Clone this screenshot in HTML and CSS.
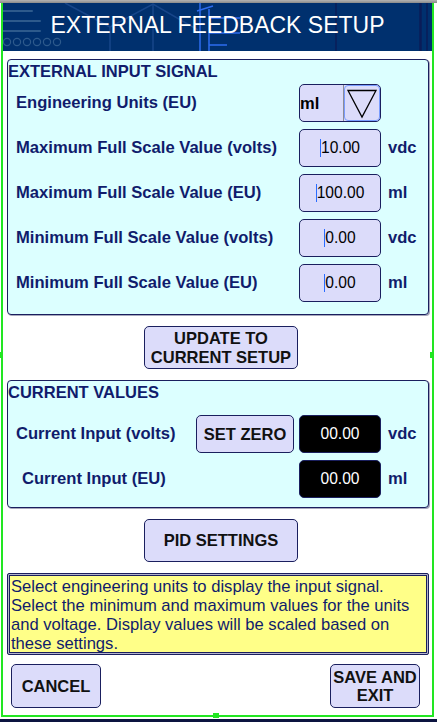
FILE: index.html
```html
<!DOCTYPE html>
<html>
<head>
<meta charset="utf-8">
<title>External Feedback Setup</title>
<link rel="stylesheet" href="styles.css">
</head>
<body>
<div class="topbar"></div>
<div class="frame">
  <header class="hdr">
    <svg class="deco" width="429" height="48" viewBox="0 0 429 48">
      <g stroke="#2d5a8c" stroke-width="2" fill="none" stroke-linecap="round">
        <line x1="0" y1="8" x2="29" y2="8"/>
        <line x1="0" y1="18" x2="37" y2="18"/>
        <line x1="0" y1="28" x2="37" y2="28"/>
      </g>
      <g stroke="#2d5a8c" stroke-width="1.2" fill="none">
        <circle cx="4" cy="39" r="3.6"/>
        <circle cx="14" cy="39" r="3.6"/>
        <circle cx="24" cy="39" r="3.6"/>
        <circle cx="34" cy="39" r="3.6"/>
        <circle cx="44" cy="39" r="3.6"/>
        <circle cx="54" cy="39" r="3.6"/>
      </g>
      <g stroke="#17468a" stroke-width="1.5" fill="none">
        <line x1="62" y1="0" x2="107" y2="24"/>
        <polyline points="107,24 150,1 195,27"/>
        <line x1="107" y1="24" x2="107" y2="48"/>
        <line x1="150" y1="1" x2="150" y2="48"/>
      </g>
      <g stroke="#2d6cf0" stroke-width="1.5" fill="none">
        <line x1="197" y1="0" x2="197" y2="48"/>
        <line x1="206" y1="6" x2="206" y2="48"/>
        <line x1="206" y1="15" x2="237" y2="15"/>
        <line x1="206" y1="30" x2="237" y2="30"/>
        <line x1="206" y1="42" x2="224" y2="42"/>
        <line x1="194" y1="8" x2="210" y2="3"/>
      </g>
      <g stroke="#0a1c58" fill="none">
        <line x1="333" y1="0" x2="333" y2="48" stroke-width="1.5"/>
        <line x1="417.5" y1="0" x2="417.5" y2="48" stroke-width="2.5"/>
        <line x1="424" y1="0" x2="424" y2="48" stroke-width="1.5"/>
      </g>
    </svg>
    <h1>EXTERNAL FEEDBACK SETUP</h1>
  </header>

  <main class="content">
    <section class="panel p1">
      <h2>EXTERNAL INPUT SIGNAL</h2>
      <div class="grid">
        <div class="lbl">Engineering Units (EU)</div>
        <div class="dropdown">
          <span class="dd-val">ml</span>
          <span class="dd-btn">
            <svg width="33" height="33" viewBox="0 0 33 33"><polygon points="2,3.5 30,3.5 16,30" fill="none" stroke="#000" stroke-width="1.3"/></svg>
          </span>
        </div>
        <div></div>

        <div class="lbl">Maximum Full Scale Value (volts)</div>
        <div class="field"><span class="caret"></span><span>10.00</span></div>
        <div class="unit">vdc</div>

        <div class="lbl">Maximum Full Scale Value (EU)</div>
        <div class="field"><span class="caret"></span><span>100.00</span></div>
        <div class="unit">ml</div>

        <div class="lbl">Minimum Full Scale Value (volts)</div>
        <div class="field"><span class="caret"></span><span>0.00</span></div>
        <div class="unit">vdc</div>

        <div class="lbl">Minimum Full Scale Value (EU)</div>
        <div class="field"><span class="caret"></span><span>0.00</span></div>
        <div class="unit">ml</div>
      </div>
    </section>

    <button class="btn btn-wide">UPDATE TO<br>CURRENT SETUP</button>

    <section class="panel p2">
      <h2>CURRENT VALUES</h2>
      <div class="grid">
        <div class="lbl">Current Input (volts)</div>
        <button class="btn setzero">SET ZERO</button>
        <div class="field display">00.00</div>
        <div class="unit">vdc</div>

        <div class="lbl lbl-indent">Current Input (EU)</div>
        <div></div>
        <div class="field display">00.00</div>
        <div class="unit">ml</div>
      </div>
    </section>

    <button class="btn btn-wide">PID SETTINGS</button>

    <div class="info">Select engineering units to display the input signal.<br>Select the minimum and maximum values for the units<br>and voltage. Display values will be scaled based on<br>these settings.</div>

    <div class="footer">
      <button class="btn btn-sm">CANCEL</button>
      <button class="btn btn-sm">SAVE AND<br>EXIT</button>
    </div>
  </main>

  <span class="handle h-left"></span>
  <span class="handle h-right"></span>
  <span class="handle h-bottom"></span>
</div>
<div class="bottombar"></div>
</body>
</html>
```

FILE: styles.css
```css
html, body {
  margin: 0;
  padding: 0;
}

body {
  width: 437px;
  height: 722px;
  overflow: hidden;
  background: #ffffff;
  font-family: "Liberation Sans", Arial, sans-serif;
}

.topbar {
  height: 3px;
  background: linear-gradient(#b4b4b4, #8a8a8a);
}

.frame {
  position: relative;
  margin-left: 1px;
  width: 429px;
  height: 712px;
  border: 2px solid #22e622;
  border-top: 0;
}

.hdr {
  position: relative;
  height: 48px;
  background: #00306e;
  overflow: hidden;
}

.deco {
  position: absolute;
  left: 0;
  top: 0;
}

.hdr h1 {
  position: relative;
  margin: 0;
  font-size: 23px;
  font-weight: normal;
  line-height: 45px;
  color: #ffffff;
  text-align: center;
}

.content {
  display: flex;
  flex-direction: column;
  height: 664px;
  box-sizing: border-box;
  padding: 8px 3px 0 4px;
}

.panel {
  background: #dcffff;
  border: 1px solid #1a1f5e;
  border-radius: 4px;
  box-shadow: 1px 1px 0 #a8a8bc;
  padding-top: 2px;
}

.panel h2 {
  margin: 0;
  font-size: 16.5px;
  line-height: 18px;
  font-weight: bold;
  color: #101c6c;
}

.grid {
  display: grid;
  grid-auto-rows: 38px;
  row-gap: 7px;
  align-items: center;
  padding-left: 8px;
}

.p1 .grid {
  grid-template-columns: 1fr 82px 47px;
  margin-top: 4px;
  padding-bottom: 12px;
}

.p2 {
  margin-top: 11px;
}

.p2 .grid {
  grid-template-columns: 1fr 103px 82px 47px;
  margin-top: 14px;
  padding-bottom: 9px;
}

.lbl {
  font-size: 16.6px;
  font-weight: bold;
  color: #101c6c;
  white-space: nowrap;
}

.lbl-indent {
  padding-left: 6px;
}

.unit {
  padding-left: 7px;
  font-size: 16.6px;
  font-weight: bold;
  color: #101c6c;
}

.field {
  height: 38px;
  box-sizing: border-box;
  border: 1.5px solid #1a1f5e;
  border-radius: 5px;
  background: #dcdcfa;
  display: flex;
  align-items: center;
  justify-content: center;
  font-size: 15.6px;
  color: #000000;
}

.caret {
  width: 1px;
  height: 18px;
  background: #2a6cff;
}

.display {
  background: #000000;
  color: #ffffff;
}

.dropdown {
  height: 38px;
  box-sizing: border-box;
  border: 1.5px solid #1a1f5e;
  border-radius: 5px;
  background: #dcdcfa;
  display: flex;
}

.dd-val {
  width: 44px;
  box-sizing: border-box;
  border-right: 1px solid #8c8c96;
  display: flex;
  align-items: center;
  font-size: 16.5px;
  font-weight: bold;
  color: #000000;
}

.dd-btn {
  flex: 1;
  border: 1px solid #7a9cff;
  border-radius: 4px;
  display: flex;
  align-items: center;
  justify-content: center;
}

.dd-btn svg {
  display: block;
}

.btn {
  font-family: "Liberation Sans", Arial, sans-serif;
  font-size: 16.5px;
  font-weight: bold;
  line-height: 19px;
  color: #111111;
  background: #dcdcfa;
  border: 1.5px solid #1a1f5e;
  border-radius: 5px;
  padding: 0;
  box-sizing: border-box;
}

.btn-wide {
  align-self: flex-start;
  width: 154px;
  height: 43px;
  margin-left: 137px;
  margin-top: 11px;
}

.setzero {
  width: 98px;
  height: 38px;
}

.info {
  margin-top: 11px;
  height: 82px;
  box-sizing: border-box;
  background: #ffff88;
  border: 1px solid #1a1f5e;
  border-radius: 2px;
  box-shadow: inset 0 0 0 1px #b4b4cc, inset 0 0 0 2px #1a1f5e;
  padding: 3px 1px 1px 3px;
  font-size: 16.6px;
  line-height: 19px;
  color: #101c6c;
  white-space: nowrap;
}

.footer {
  display: flex;
  justify-content: space-between;
  margin-top: 9px;
  padding-left: 4px;
  padding-right: 9px;
}

.btn-sm {
  width: 90px;
  height: 44px;
  line-height: 18px;
}

.handle {
  position: absolute;
  background: #22e622;
}

.h-left {
  left: -3px;
  top: 349px;
  width: 3px;
  height: 6px;
}

.h-right {
  left: 427px;
  top: 349px;
  width: 4px;
  height: 6px;
}

.h-bottom {
  left: 210px;
  top: 710px;
  width: 6px;
  height: 5px;
}

.bottombar {
  margin-top: 2px;
  height: 3px;
  background: #0c1440;
}
```
